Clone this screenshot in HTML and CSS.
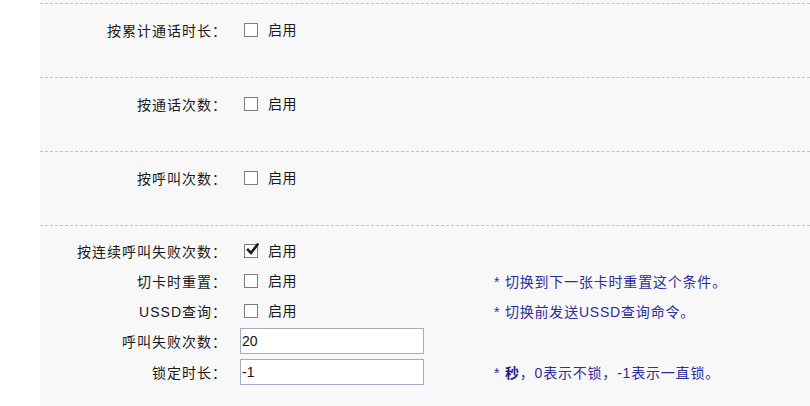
FILE: index.html
```html
<!DOCTYPE html>
<html lang="zh-CN">
<head>
<meta charset="utf-8">
<link rel="stylesheet" href="styles.css">
</head>
<body>
<div class="page">
  <section class="group">
    <div class="row">
      <div class="label">按累计通话时长：</div>
      <div class="ctrl"><span class="cb"></span><span class="txt">启用</span></div>
      <div class="note"></div>
    </div>
  </section>
  <section class="group">
    <div class="row">
      <div class="label">按通话次数：</div>
      <div class="ctrl"><span class="cb"></span><span class="txt">启用</span></div>
      <div class="note"></div>
    </div>
  </section>
  <section class="group">
    <div class="row">
      <div class="label">按呼叫次数：</div>
      <div class="ctrl"><span class="cb"></span><span class="txt">启用</span></div>
      <div class="note"></div>
    </div>
  </section>
  <section class="group last">
    <div class="row">
      <div class="label">按连续呼叫失败次数：</div>
      <div class="ctrl"><span class="cb checked"><svg viewBox="0 0 14 14" width="14" height="14"><path d="M3 6.8 L6 10 L12.5 1.5" fill="none" stroke="#1e1e1e" stroke-width="2.6" stroke-linecap="square" stroke-linejoin="miter"/></svg></span><span class="txt">启用</span></div>
      <div class="note"></div>
    </div>
    <div class="row">
      <div class="label">切卡时重置：</div>
      <div class="ctrl"><span class="cb"></span><span class="txt">启用</span></div>
      <div class="note">* 切换到下一张卡时重置这个条件。</div>
    </div>
    <div class="row">
      <div class="label">USSD查询：</div>
      <div class="ctrl"><span class="cb"></span><span class="txt">启用</span></div>
      <div class="note">* 切换前发送USSD查询命令。</div>
    </div>
    <div class="row tall">
      <div class="label">呼叫失败次数：</div>
      <div class="ctrl"><input class="field" type="text" value="20"></div>
      <div class="note"></div>
    </div>
    <div class="row tall">
      <div class="label">锁定时长：</div>
      <div class="ctrl"><input class="field" type="text" value="-1"></div>
      <div class="note">* <b>秒</b>，0表示不锁，-1表示一直锁。</div>
    </div>
  </section>
</div>
</body>
</html>
```
FILE: styles.css
```css
html, body {
  margin: 0;
  padding: 0;
  background: #ffffff;
}
body {
  font-family: "Liberation Sans", "Noto Sans CJK SC", sans-serif;
  font-size: 14px;
  color: #1a1a1a;
  overflow: hidden;
}
.page {
  margin-left: 40px;
  padding-top: 3px;
  background: #f8f8f8;
  min-height: 403px;
}
.group {
  border-top: 1px dashed #c2c2c2;
  padding: 11px 0 32px;
}
.group.last {
  padding-top: 10px;
  padding-bottom: 20px;
}
.row {
  display: grid;
  grid-template-columns: 187px 241px 1fr;
  column-gap: 13px;
  height: 30px;
  align-items: center;
}
.row.tall {
  height: 30.5px;
}
.label {
  text-align: right;
  white-space: nowrap;
  letter-spacing: 1px;
}
.ctrl {
  display: flex;
  align-items: center;
  gap: 10px;
}
.cb {
  width: 14px;
  height: 14px;
  box-sizing: border-box;
  border: 1px solid #7d7d7d;
  background: #ffffff;
  margin-left: 4px;
  position: relative;
  flex: none;
}
.cb svg {
  position: absolute;
  left: 0;
  top: -2px;
}
.txt {
  line-height: 20px;
  letter-spacing: 0.5px;
}
.field {
  width: 184px;
  height: 26px;
  box-sizing: border-box;
  border: 1px solid #a3abc6;
  background: #ffffff;
  padding: 0 1px;
  margin: 0;
  font-family: "Liberation Sans", "Noto Sans CJK SC", sans-serif;
  font-size: 14px;
  color: #111111;
  outline: none;
}
.note {
  color: #2d2d9c;
  font-size: 14px;
  white-space: nowrap;
  letter-spacing: 0.8px;
}
.note b {
  font-weight: bold;
  color: #1f1f8a;
}
```
